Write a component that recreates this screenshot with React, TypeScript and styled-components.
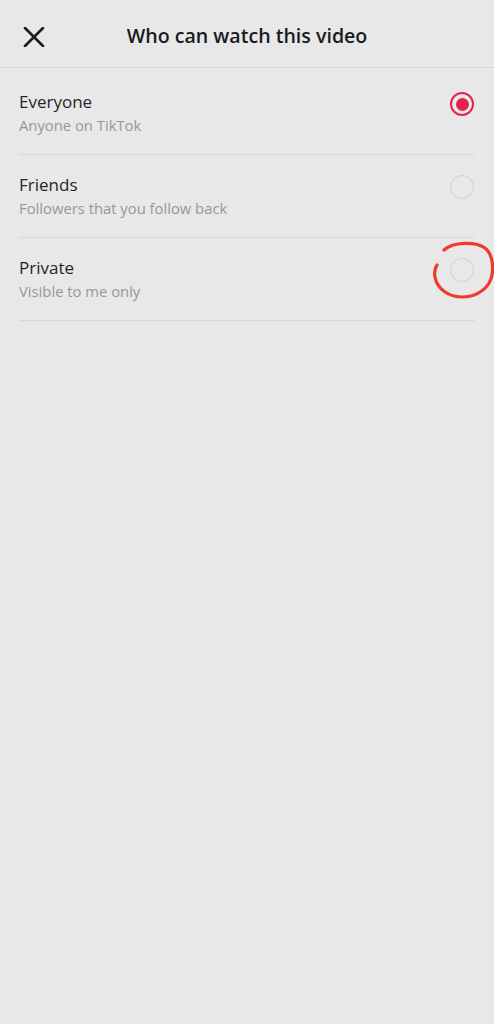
import React, { useState } from "react";
import styled, { createGlobalStyle } from "styled-components";

const Global = createGlobalStyle`
  html, body { margin: 0; padding: 0; background: #e8e8e8; overflow-x: hidden; }
  body { font-family: "Open Sans", "Liberation Sans", sans-serif; }
`;

const Page = styled.div`
  width: 494px;
  min-height: 1024px;
  background: #e8e8e8;
  display: flex;
  flex-direction: column;
  overflow: hidden;
`;

const Header = styled.header`
  height: 68px;
  display: flex;
  align-items: center;
  position: relative;
  border-bottom: 1.5px solid #d7d7d7;
  box-sizing: border-box;
`;

const CloseButton = styled.button`
  position: absolute;
  left: 22px;
  top: 26px;
  width: 24px;
  height: 22px;
  padding: 0;
  border: none;
  background: transparent;
  display: flex;
  align-items: center;
  justify-content: center;
`;

const Title = styled.h1`
  flex: 1;
  margin: 0;
  text-align: center;
  font-family: "Open Sans", sans-serif;
  font-size: 19.6px;
  font-weight: 600;
  color: #1a1b22;
  padding-top: 3px;
`;

const List = styled.div`
  display: flex;
  flex-direction: column;
  padding: 4px 19px 0;
`;

const Row = styled.div`
  height: 83px;
  display: flex;
  align-items: center;
  justify-content: space-between;
  border-bottom: 1.5px solid #d8d8d8;
  box-sizing: border-box;
  cursor: pointer;
`;

const Texts = styled.div`
  display: flex;
  flex-direction: column;
  gap: 2px;
  padding-bottom: 1px;
`;

const RowTitle = styled.div`
  font-family: "Open Sans", sans-serif;
  font-size: 17px;
  color: #24252c;
`;

const RowSub = styled.div`
  font-family: "Open Sans", sans-serif;
  font-size: 14.8px;
  color: #96979b;
`;

const RadioWrap = styled.div`
  position: relative;
  align-self: flex-start;
  width: 24px;
  height: 24px;
  margin: 20px 1px 0 0;
`;

const Radio = styled.div<{ $on: boolean }>`
  width: 24px;
  height: 24px;
  border-radius: 50%;
  box-sizing: border-box;
  border: ${(p) => (p.$on ? "2.6px solid #e3234b" : "1.6px solid #cfcfcf")};
  display: flex;
  align-items: center;
  justify-content: center;
  &::after {
    content: "";
    display: ${(p) => (p.$on ? "block" : "none")};
    width: 13px;
    height: 13px;
    border-radius: 50%;
    background: #e3234b;
  }
`;

const Annotation = styled.svg`
  position: absolute;
  left: -19px;
  top: -19px;
  pointer-events: none;
`;

const options = [
  { title: "Everyone", sub: "Anyone on TikTok" },
  { title: "Friends", sub: "Followers that you follow back" },
  { title: "Private", sub: "Visible to me only" },
];

export default function App() {
  const [sel, setSel] = useState(0);
  return (
    <>
      <Global />
      <Page>
        <Header>
          <CloseButton aria-label="Close">
            <svg width="22" height="20" viewBox="0 0 22 20">
              <path d="M2 1 L20 19 M20 1 L2 19" stroke="#1a1b22" strokeWidth="2.6" strokeLinecap="round" />
            </svg>
          </CloseButton>
          <Title>Who can watch this video</Title>
        </Header>
        <List>
          {options.map((o, i) => (
            <Row key={o.title} onClick={() => setSel(i)}>
              <Texts>
                <RowTitle>{o.title}</RowTitle>
                <RowSub>{o.sub}</RowSub>
              </Texts>
              <RadioWrap>
                <Radio $on={sel === i} />
                {i === 2 && (
                  <Annotation width="63" height="62" viewBox="0 0 63 62">
                    <path
                      d="M13 11 C22 3 44 2 54 9 C62 15 63 30 60 40 C55 53 42 58 31 58 C18 58 6 50 4 38 C3 33 4 29 6 26"
                      fill="none"
                      stroke="#f03a2a"
                      strokeWidth="3.2"
                      strokeLinecap="round"
                    />
                  </Annotation>
                )}
              </RadioWrap>
            </Row>
          ))}
        </List>
      </Page>
    </>
  );
}
